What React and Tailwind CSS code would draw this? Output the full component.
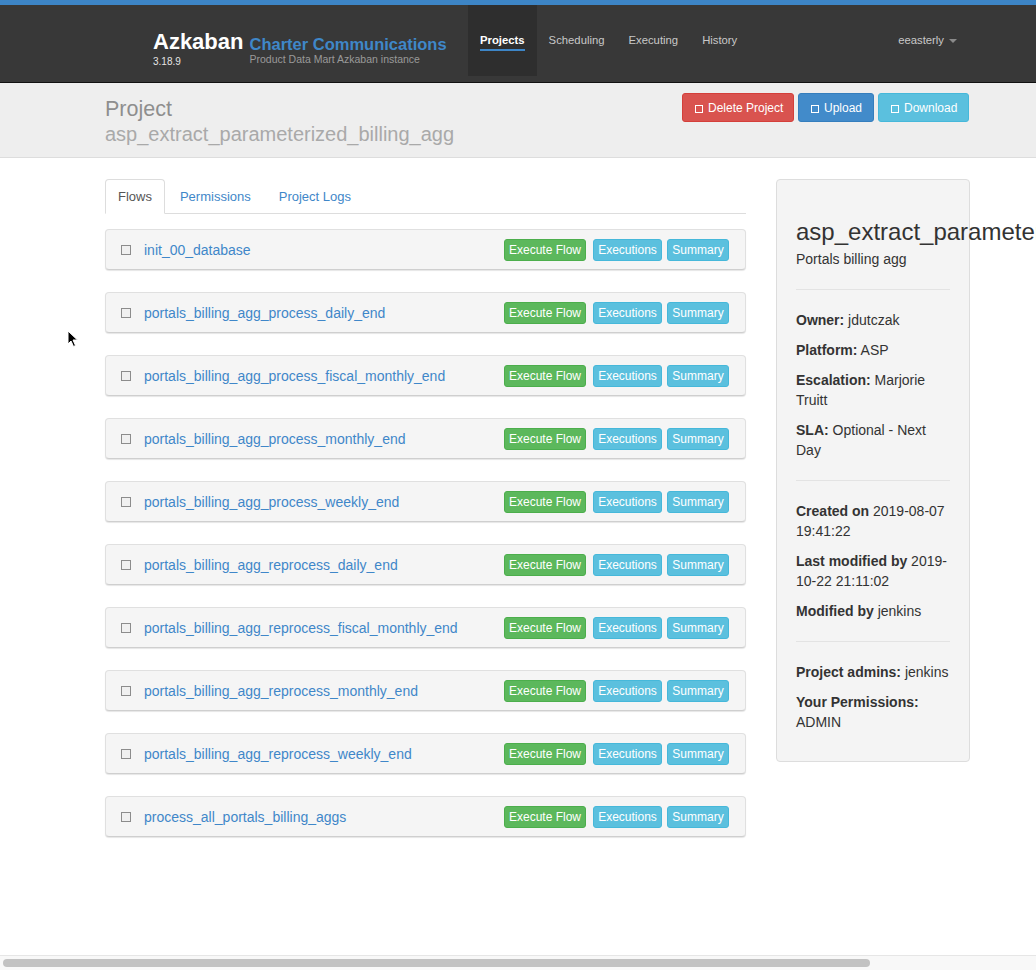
import React from 'react';

const flows = [
  'init_00_database',
  'portals_billing_agg_process_daily_end',
  'portals_billing_agg_process_fiscal_monthly_end',
  'portals_billing_agg_process_monthly_end',
  'portals_billing_agg_process_weekly_end',
  'portals_billing_agg_reprocess_daily_end',
  'portals_billing_agg_reprocess_fiscal_monthly_end',
  'portals_billing_agg_reprocess_monthly_end',
  'portals_billing_agg_reprocess_weekly_end',
  'process_all_portals_billing_aggs',
];

function Glyph() {
  return <span className="inline-block w-[8px] h-[8px] border border-white mt-[3px] shrink-0" />;
}

function FlowRow({ name }) {
  return (
    <div className="flex items-center h-[41px] pl-[15px] pr-[16px] mb-[22px] bg-[#f5f5f5] border border-[#e0e0e0] border-b-[#cfcfcf] rounded-[4px] shadow-[0_1px_1px_rgba(0,0,0,0.1)]">
      <span className="w-[10px] h-[10px] border border-[#8c8c8c] bg-[#f0f0f0] shrink-0 mt-[1px]" />
      <a className="ml-[13px] text-[14px] text-[#3f87c9] leading-5">{name}</a>
      <div className="ml-auto flex items-center mt-[1px]">
        <button className="w-[82px] h-[22px] text-[12px] leading-[18px] text-white bg-[#5cb85c] border border-[#4cae4c] rounded-[3px]">Execute Flow</button>
        <button className="ml-[7px] w-[69px] h-[22px] text-[12px] leading-[18px] text-white bg-[#5bc0de] border border-[#46b8da] rounded-[3px]">Executions</button>
        <button className="ml-[5px] w-[62px] h-[22px] text-[12px] leading-[18px] text-white bg-[#5bc0de] border border-[#46b8da] rounded-[3px]">Summary</button>
      </div>
    </div>
  );
}

export default function App() {
  return (
    <div className="relative w-full h-[970px] overflow-hidden flex flex-col bg-white text-[#333] font-['Liberation_Sans',Arial,sans-serif]">
      {/* top bar + navbar */}
      <div className="h-[5px] bg-[#3d85c6] shrink-0" />
      <div className="h-[78px] bg-[#383838] border-b border-[#111] shrink-0">
        <div className="ml-[105px] w-[864px] pl-[48px] flex h-[77px]">
          <div className="w-[315px] shrink-0 flex items-start">
            <div className="pt-[26px] flex flex-col">
              <span className="text-[22px] leading-[22px] font-bold text-white">Azkaban</span>
              <span className="mt-[3px] text-[10px] leading-[12px] text-[#e5e5e5]">3.18.9</span>
            </div>
            <div className="ml-[6px] pt-[30px] flex flex-col">
              <span className="text-[16.5px] leading-[18px] font-bold text-[#3f87c9]">Charter Communications</span>
              <span className="text-[10.5px] leading-[12px] text-[#9a9a9a]">Product Data Mart Azkaban instance</span>
            </div>
          </div>
          <div className="flex h-[71px]">
            <div className="px-3 bg-[#2e2e2e] pt-[28px] flex flex-col items-start">
              <span className="text-[11.3px] leading-[14px] font-bold text-white border-b-2 border-[#3d85c6] pb-[2px]">Projects</span>
            </div>
            <div className="px-3 pt-[28px] text-[11.3px] leading-[14px] text-[#c8c8c8]">Scheduling</div>
            <div className="px-3 pt-[28px] text-[11.3px] leading-[14px] text-[#c8c8c8]">Executing</div>
            <div className="px-3 pt-[28px] text-[11.3px] leading-[14px] text-[#c8c8c8]">History</div>
          </div>
          <div className="ml-auto pr-[12px] pt-[28px] flex items-start">
            <span className="text-[11.3px] leading-[14px] text-[#c8c8c8]">eeasterly</span>
            <span className="ml-[5px] mt-[6px] w-0 h-0 border-t-[4px] border-t-[#8a8a8a] border-x-[4px] border-x-transparent" />
          </div>
        </div>
      </div>

      {/* page header */}
      <div className="h-[75px] bg-[#eeeeee] border-b border-[#dddddd] shrink-0">
        <div className="ml-[105px] w-[864px] flex justify-between">
          <div className="pt-[14px] flex flex-col">
            <span className="text-[21.5px] leading-[25px] text-[#8e8e8e]">Project</span>
            <span className="text-[20px] leading-[24px] text-[#a9a9a9]">asp_extract_parameterized_billing_agg</span>
          </div>
          <div className="pt-[10px] flex items-start gap-1">
            <button className="w-[112px] h-[29px] pl-[12px] flex items-center gap-[5px] text-[12px] text-white bg-[#d9534f] border border-[#d43f3a] rounded-[3px]">
              <Glyph />Delete Project
            </button>
            <button className="w-[76px] h-[29px] pl-[12px] flex items-center gap-[5px] text-[12px] text-white bg-[#428bca] border border-[#357ebd] rounded-[3px]">
              <Glyph />Upload
            </button>
            <button className="w-[91px] h-[29px] pl-[12px] flex items-center gap-[5px] text-[12px] text-white bg-[#5bc0de] border border-[#46b8da] rounded-[3px]">
              <Glyph />Download
            </button>
          </div>
        </div>
      </div>

      {/* content */}
      <div className="flex-1 min-h-0">
        <div className="ml-[105px] w-[864px] mt-[21px] flex items-start gap-[30px]">
          <div className="w-[641px] shrink-0">
            <ul className="flex border-b border-[#dddddd]">
              <li className="-mb-px mr-[2px] h-[35px] px-3 flex items-center text-[13px] text-[#555] bg-white border border-[#dddddd] border-b-transparent rounded-t-[4px]">Flows</li>
              <li className="-mb-px mr-[2px] h-[35px] px-3 flex items-center text-[13px] text-[#3f87c9] border border-transparent">Permissions</li>
              <li className="-mb-px mr-[2px] h-[35px] px-3 flex items-center text-[13px] text-[#3f87c9] border border-transparent">Project Logs</li>
            </ul>
            <div className="mt-[15px]">
              {flows.map((f) => (
                <FlowRow key={f} name={f} />
              ))}
            </div>
          </div>

          <div className="w-[194px] shrink-0 bg-[#f4f4f4] border border-[#dddddd] rounded-[4px] px-[19px] pt-[19px] pb-[29px] flex flex-col text-[14px] leading-5">
            <h3 className="mt-[20px] text-[24px] leading-[26px] whitespace-nowrap text-[#333]">asp_extract_parameterized_billing_agg</h3>
            <p className="mt-[4px]">Portals billing agg</p>
            <hr className="my-[20px] border-t border-[#e3e3e3]" />
            <div className="flex flex-col gap-[10px]">
              <p><b>Owner:</b> jdutczak</p>
              <p><b>Platform:</b> ASP</p>
              <p><b>Escalation:</b> Marjorie Truitt</p>
              <p><b>SLA:</b> Optional - Next Day</p>
            </div>
            <hr className="my-[20px] border-t border-[#e3e3e3]" />
            <div className="flex flex-col gap-[10px]">
              <p><b>Created on</b> 2019-08-07 19:41:22</p>
              <p><b>Last modified by</b> 2019-<wbr />10-22 21:11:02</p>
              <p><b>Modified by</b> jenkins</p>
            </div>
            <hr className="my-[20px] border-t border-[#e3e3e3]" />
            <div className="flex flex-col gap-[10px]">
              <p><b>Project admins:</b> jenkins</p>
              <p><b>Your Permissions:</b> ADMIN</p>
            </div>
          </div>
        </div>
      </div>

      {/* horizontal scrollbar */}
      <div className="h-[15px] shrink-0 bg-[#f8f8f8] border-t border-[#e6e6e6] flex items-center px-[3px]">
        <div className="w-[867px] h-[8px] rounded-full bg-[#c2c2c2]" />
      </div>

      {/* mouse pointer */}
      <svg className="absolute left-[67px] top-[330px]" width="12" height="18" viewBox="0 0 12 18">
        <path d="M1 1 L1 14 L4 11 L6.5 16.5 L8.5 15.5 L6 10 L10.5 10 Z" fill="#000" stroke="#fff" strokeWidth="1" strokeLinejoin="round" />
      </svg>
    </div>
  );
}
